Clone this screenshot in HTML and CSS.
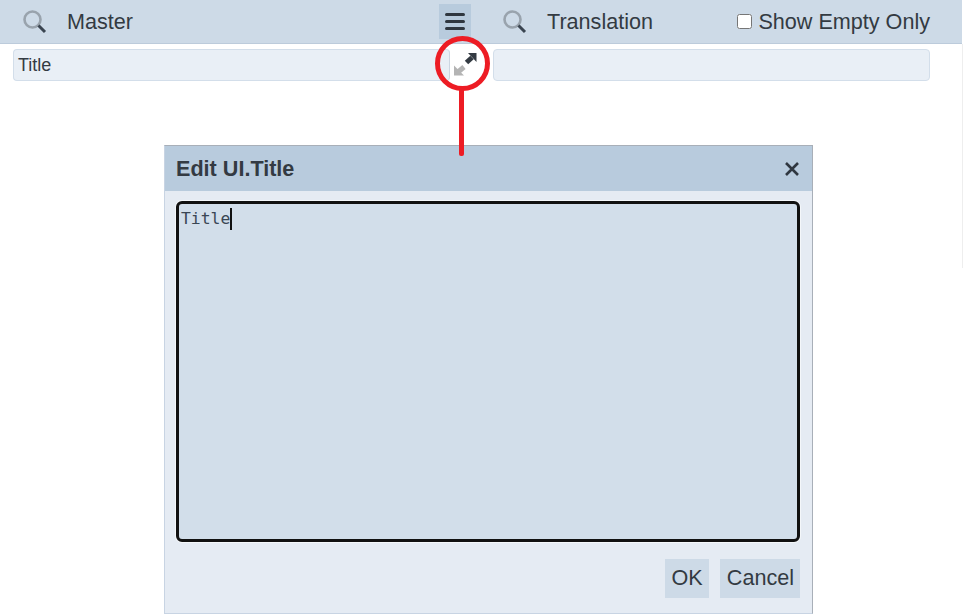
FILE: index.html
```html
<!DOCTYPE html>
<html>
<head>
    <meta charset="utf-8">
    <title>Edit UI.Title</title>
    <link rel="stylesheet" href="styles.css">
</head>
<body>
    <div class="toolbar">
        <div class="pane pane-master">
            <svg class="search" width="26" height="26" viewBox="0 0 26 26">
                <circle cx="10.5" cy="10.5" r="8" fill="none" stroke="#99a3ad" stroke-width="2.6"/>
                <path d="M16.5 16.5 L23 23" stroke="#3a4450" stroke-width="3"/>
            </svg>
            <span class="pane-title">Master</span>
            <div class="menu-btn">
                <span></span><span></span><span></span>
            </div>
        </div>
        <div class="pane pane-trans">
            <svg class="search" width="26" height="26" viewBox="0 0 26 26">
                <circle cx="10.5" cy="10.5" r="8" fill="none" stroke="#99a3ad" stroke-width="2.6"/>
                <path d="M16.5 16.5 L23 23" stroke="#3a4450" stroke-width="3"/>
            </svg>
            <span class="pane-title">Translation</span>
            <label class="empty-only"><input type="checkbox">Show Empty Only</label>
        </div>
    </div>

    <div class="row">
        <div class="field field-master">Title</div>
        <svg class="expand" width="26" height="26" viewBox="0 0 26 26">
            <path d="M14.5 10.5 L20 5.5" stroke="#333a42" stroke-width="5"/>
            <path d="M16 1 H24.5 V10 Z" fill="#333a42"/>
            <path d="M12 15 L6 20" stroke="#b4b4b4" stroke-width="5"/>
            <path d="M2 13.5 V23.5 H12 Z" fill="#b4b4b4"/>
        </svg>
        <div class="field field-trans"></div>
    </div>

    <div class="scroll-edge"></div>

    <div class="dialog">
        <div class="dialog-head">
            <span>Edit UI.Title</span>
            <svg width="16" height="16" viewBox="0 0 16 16">
                <path d="M2 2 L14 14 M14 2 L2 14" stroke="#2f3740" stroke-width="2.6"/>
            </svg>
        </div>
        <div class="dialog-body">
            <div class="editor">Title<span class="caret"></span></div>
            <div class="dialog-btns">
                <div class="btn">OK</div>
                <div class="btn">Cancel</div>
            </div>
        </div>
    </div>

    <div class="ring"></div>
    <div class="ring-line"></div>
</body>
</html>
```

FILE: styles.css
```css
* {
    margin: 0;
    padding: 0;
    box-sizing: border-box;
}

body {
    font-family: "Liberation Sans", Arial, sans-serif;
    color: #333a42;
    background: #fff;
    overflow: hidden;
}

.toolbar {
    display: flex;
    width: 962px;
    height: 44px;
    background: #cddae7;
    border-bottom: 1px solid #bccbdb;
}

.pane {
    display: flex;
    align-items: center;
    height: 43px;
}

.pane-master {
    width: 480px;
    padding-left: 22px;
}

.pane-trans {
    flex: 1;
    padding-left: 22px;
}

.search {
    flex: none;
}

.pane-title {
    font-size: 21.6px;
    margin-left: 19px;
}

.menu-btn {
    width: 32px;
    height: 35px;
    margin-left: auto;
    margin-right: 9px;
    background: #b8cbdd;
    display: flex;
    flex-direction: column;
    justify-content: center;
    align-items: center;
    gap: 4px;
}

.menu-btn span {
    width: 20px;
    height: 3px;
    border-radius: 2px;
    background: #2f3740;
}

.empty-only {
    display: flex;
    align-items: center;
    margin-left: auto;
    margin-right: 32px;
    font-size: 21.6px;
}

.empty-only input {
    width: 15px;
    height: 15px;
    margin-right: 6px;
}

.row {
    display: flex;
    align-items: center;
    height: 32px;
    margin-top: 5px;
    padding-left: 13px;
}

.field {
    height: 32px;
    background: #e9eff6;
    border: 1px solid #d3deea;
    border-radius: 4px;
    font-size: 18px;
    line-height: 30px;
    padding-left: 4px;
}

.field-master {
    width: 437px;
    border-right: 1px solid #ccd6e2;
}

.field-trans {
    width: 437px;
}

.expand {
    flex: none;
    margin: 0 15px 0 2px;
}

.scroll-edge {
    position: absolute;
    left: 962px;
    top: 44px;
    width: 1px;
    height: 224px;
    background: #eee;
}

.dialog {
    position: absolute;
    left: 164px;
    top: 145px;
    width: 649px;
    height: 469px;
    background: #e5ebf3;
    border: 1px solid #a8afb8;
    border-left-color: #c8d4e3;
    border-bottom-color: #c8d4e3;
}

.dialog-head {
    display: flex;
    align-items: center;
    justify-content: space-between;
    height: 45px;
    padding: 0 12px 0 11px;
    background: #b8cbdd;
    font-size: 21.6px;
    font-weight: bold;
}

.dialog-body {
    padding: 10px 12px 0 11px;
}

.editor {
    height: 341px;
    background: #d2deea;
    border: 3px solid #111;
    border-radius: 6px;
    box-shadow: 0 0 0 1px #f4f7fa;
    font-family: "DejaVu Sans Mono", monospace;
    font-size: 16.4px;
    line-height: 20px;
    padding: 4px 2px;
    color: #3a4654;
}

.caret {
    display: inline-block;
    width: 2px;
    height: 22px;
    margin-bottom: -6px;
    background: #111;
}

.dialog-btns {
    display: flex;
    justify-content: flex-end;
    gap: 11px;
    margin-top: 17px;
}

.btn {
    height: 39px;
    line-height: 38px;
    padding: 0 6px 0 7px;
    background: #cddae7;
    font-size: 21.6px;
}

.ring {
    position: absolute;
    left: 435px;
    top: 36px;
    width: 55px;
    height: 55px;
    border: 5px solid #ed1c24;
    border-radius: 50%;
}

.ring-line {
    position: absolute;
    left: 459px;
    top: 88px;
    width: 5px;
    height: 68px;
    border-radius: 0 0 2px 2px;
    background: #ed1c24;
}
```
